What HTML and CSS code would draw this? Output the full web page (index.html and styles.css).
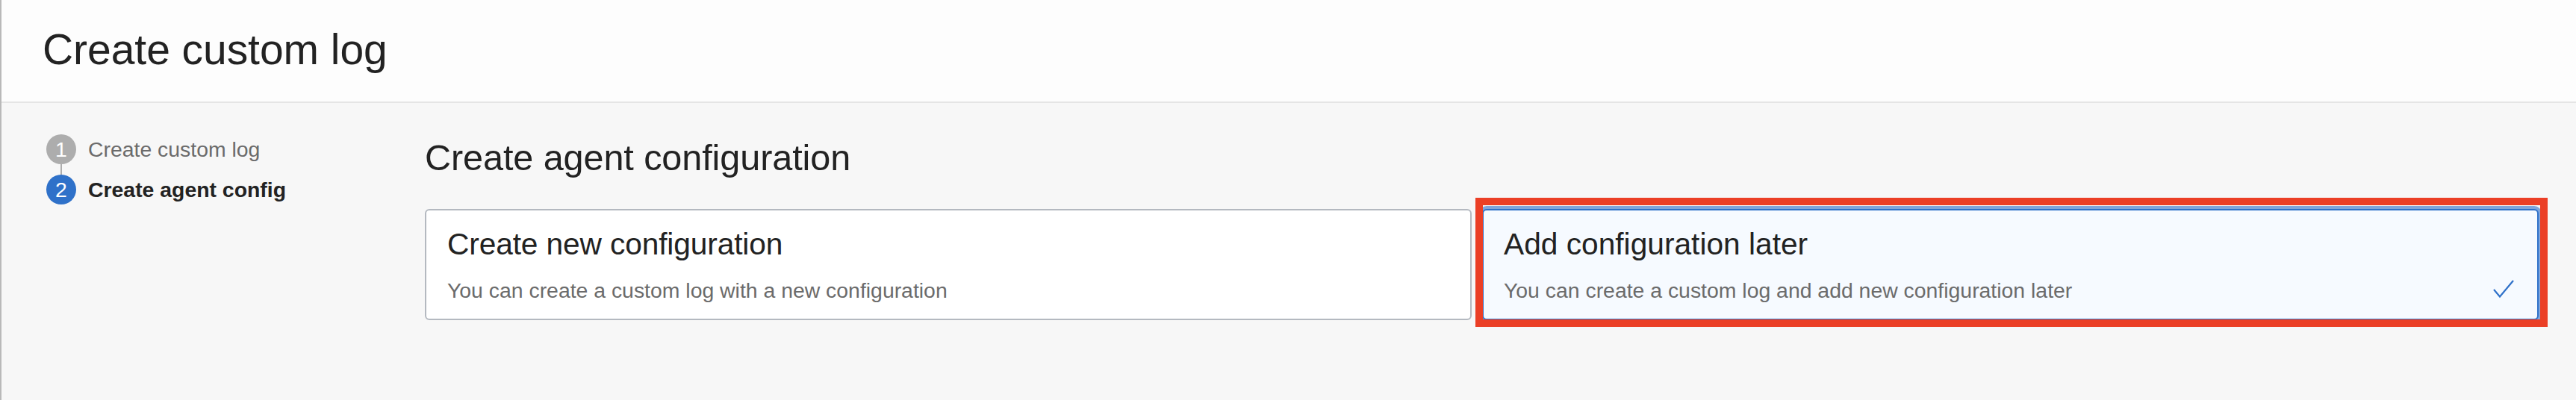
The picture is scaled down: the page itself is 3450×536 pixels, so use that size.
FILE: index.html
```
<!DOCTYPE html>
<html lang="en">
<head>
<meta charset="utf-8">
<title>Create custom log</title>
<link rel="stylesheet" href="styles.css">
</head>
<body>
<div class="panel">
  <header class="header"><h1 class="title">Create custom log</h1></header>
  <div class="content">
    <ol class="steps">
      <li class="step"><span class="badge">1</span><span class="label">Create custom log</span></li>
      <li class="connector" aria-hidden="true"></li>
      <li class="step current"><span class="badge">2</span><span class="label">Create agent config</span></li>
    </ol>
    <main class="main">
      <h2 class="heading">Create agent configuration</h2>
      <div class="cards">
        <section class="card">
          <h3 class="card-title">Create new configuration</h3>
          <p class="card-text">You can create a custom log with a new configuration</p>
        </section>
        <section class="card selected">
          <h3 class="card-title">Add configuration later</h3>
          <p class="card-text">You can create a custom log and add new configuration later</p>
          <svg class="check" width="30" height="26" viewBox="0 0 30 26"><path d="M2 14L10 23.5L28 2" fill="none" stroke="#2f71c9" stroke-width="2.2"/></svg>
          <div class="highlight"></div>
        </section>
      </div>
    </main>
  </div>
</div>
</body>
</html>
```
FILE: styles.css
```
* { box-sizing: border-box; margin: 0; padding: 0; }
body { font-family: "Liberation Sans", Arial, sans-serif; color: #222; background: #f7f7f7; }
h1, h2, h3 { font-weight: 400; }
.panel { min-height: 536px; border-left: 2px solid #b9b9b9; overflow: hidden; }
.header { height: 138px; padding: 34px 55px 0; background: #fdfdfd; border-bottom: 2px solid #e5e5e5; }
.title { font-size: 57px; line-height: 64px; letter-spacing: -0.05px; }
.content { display: flex; }
.steps { width: 567px; flex: none; list-style: none; padding: 42px 0 0 60px; }
.step { display: flex; align-items: center; gap: 16px; height: 40px; font-size: 28.4px; line-height: 40px; color: #6b6b6b; }
.badge { width: 40px; height: 40px; border-radius: 50%; background: #adadad; color: #fff; text-align: center; }
.connector { width: 2px; height: 14px; margin-left: 19px; background: #adadad; }
.current .label { font-weight: 700; color: #222; }
.current .badge { background: #2f71c9; }
.main { flex: 1; padding: 45px 50px 0 0; }
.heading { font-size: 48.6px; line-height: 56px; margin-bottom: 41px; letter-spacing: -0.1px; }
.cards { display: grid; grid-template-columns: 1402px 1fr; gap: 14px; }
.card { position: relative; height: 149px; padding: 21px 28px; border: 2px solid #b4b9c0; border-radius: 6px; background: #fff; }
.card-title { font-size: 40.7px; line-height: 48px; margin-bottom: 20px; letter-spacing: -0.13px; }
.card-text { font-size: 28.4px; line-height: 36px; color: #6b6b6b; }
.selected { padding-left: 27px; background: #f6faff; border-color: #2f71c9; box-shadow: 0 0 0 4px #7fa5dc; }
.selected .card-title { letter-spacing: 0; }
.check { position: absolute; right: 30px; bottom: 27px; }
.highlight { position: absolute; top: -17px; left: -11px; right: -14px; bottom: -11px; border: 10px solid #eb3f26; }
```
